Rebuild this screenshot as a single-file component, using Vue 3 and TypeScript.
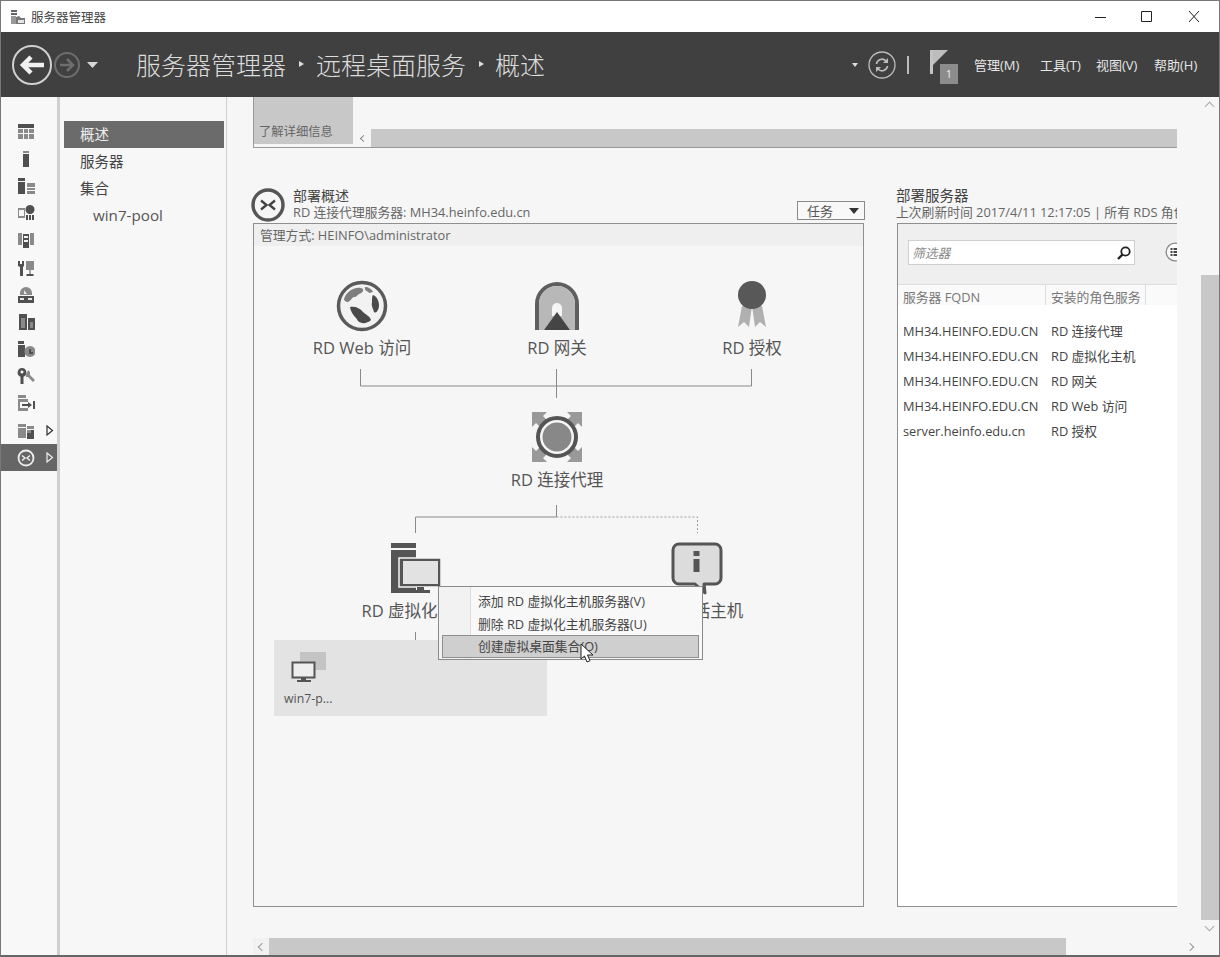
<script setup lang="ts">
interface Shape { d: string; fill: string }
interface RailItem { id: number; shapes: Shape[]; arrow?: boolean }

const D = '#505050'
const M = '#8a8a8a'

const rail: RailItem[] = [
  { id: 1, shapes: [
    { d: 'M1 1h16v4H1z', fill: D },
    { d: 'M1 6h5v4H1zM7 6h4v4H7zM12 6h5v4h-5zM1 11h5v5H1zM7 11h4v5H7zM12 11h5v5h-5z', fill: M },
  ] },
  { id: 2, shapes: [
    { d: 'M6 1h6v2H6z', fill: M },
    { d: 'M6 4h6v13H6z', fill: D },
  ] },
  { id: 3, shapes: [
    { d: 'M1 1h7v3H1zM1 5h7v12H1z', fill: D },
    { d: 'M10 6h8v4h-8zM10 11h8v2h-8zM10 14h8v3h-8z', fill: M },
  ] },
  { id: 4, shapes: [
    { d: 'M1 4h7v10H1z', fill: M },
    { d: 'M2 6h5v6H2z', fill: '#f6f6f6' },
    { d: 'M13 1a4.500 4.500 0 1 1-.01 0zM9 11h2v5H9zM12 11h2v5h-2zM15 11h2v5h-2z', fill: D },
  ] },
  { id: 5, shapes: [
    { d: 'M1 2h4v12H1zM13 2h4v12h-4z', fill: M },
    { d: 'M6 3h6v14H6z', fill: D },
    { d: 'M7 5h4v2H7zM7 9h4v2H7z', fill: '#f6f6f6' },
  ] },
  { id: 6, shapes: [
    { d: 'M1 2h2v3h2V2h2v5l-1 1v9H3V8L1 7z', fill: D },
    { d: 'M9 2h8v9H9z', fill: M },
    { d: 'M12.500 11h1v4h3v2h-7v-2h3z', fill: D },
  ] },
  { id: 7, shapes: [
    { d: 'M9 1a6 6 0 0 1 6 6v2H3V7a6 6 0 0 1 6-6z', fill: M },
    { d: 'M1 10h16v7H1z', fill: D },
    { d: 'M3 12h4v2H3zM11 12h4v2h-4zM7 4l3 4H7z', fill: '#e8e8e8' },
  ] },
  { id: 8, shapes: [
    { d: 'M2 1h8v16H2zM11 5h7v12h-7z', fill: D },
    { d: 'M4 5h4v10H4zM13 9h3v6h-3z', fill: M },
  ] },
  { id: 9, shapes: [
    { d: 'M1 1h6v3H1zM1 5h7v12H1z', fill: D },
    { d: 'M13 6a5.500 5.500 0 1 1-.01 0z', fill: M },
    { d: 'M12 9h2v3h2v2h-4z', fill: D },
  ] },
  { id: 10, shapes: [
    { d: 'M5 1a4.500 4.500 0 0 1 1.500 8.700V17h-3V9.700A4.500 4.500 0 0 1 5 1zM5 3.500a1.500 1.500 0 1 0 .01 0z', fill: D },
    { d: 'M11 3l2 2v3l5 5-2 2-5-5H9V8z', fill: M },
  ] },
  { id: 11, shapes: [
    { d: 'M1 1h8v3H1z', fill: M },
    { d: 'M1 5h10v3H3v6h8v3H1z', fill: M },
    { d: 'M5 10h6V8l4 3-4 3v-2H5zM16 7h2v8h-2z', fill: D },
  ] },
  { id: 12, arrow: true, shapes: [
    { d: 'M1 2h8v3h-8zM1 6h8v10H1z', fill: M },
    { d: 'M10 4h7v3h-7z', fill: M },
    { d: 'M10 8h7v9h-7z', fill: D },
    { d: 'M10 8h4v3h-4z', fill: M },
  ] },
]

interface Row { fqdn: string; role: string }
const rows: Row[] = [
  { fqdn: 'MH34.HEINFO.EDU.CN', role: 'RD 连接代理' },
  { fqdn: 'MH34.HEINFO.EDU.CN', role: 'RD 虚拟化主机' },
  { fqdn: 'MH34.HEINFO.EDU.CN', role: 'RD 网关' },
  { fqdn: 'MH34.HEINFO.EDU.CN', role: 'RD Web 访问' },
  { fqdn: 'server.heinfo.edu.cn', role: 'RD 授权' },
]
const navItems = ['服务器', '集合']
const menus = [
  { label: '管理(M)', w: 66 },
  { label: '工具(T)', w: 56 },
  { label: '视图(V)', w: 58 },
  { label: '帮助(H)', w: 43 },
]
</script>

<template>
  <div class="window">
    <div class="titlebar">
      <svg class="app-icon" width="16" height="16" viewBox="0 0 16 16">
        <path d="M1 1h6v2H1zM1 4h6v2H1z" fill="#666" />
        <path d="M1 7h5v8H1z" fill="#999" />
        <path d="M6 8l3-1 2 2h4v6H6z" fill="#777" />
        <path d="M8 11h6v3H8z" fill="#e4e4e4" />
      </svg>
      <span class="title-text">服务器管理器</span>
      <div class="win-controls">
        <svg width="120" height="16" viewBox="0 0 120 16">
          <path d="M1 8.500h11" stroke="#222" fill="none" />
          <path d="M47.500 2.500h10v10h-10z" stroke="#222" fill="none" />
          <path d="M95 2l10 11M105 2L95 13" stroke="#222" fill="none" />
        </svg>
      </div>
    </div>

    <header class="header">
      <svg class="nav-arrows" width="90" height="44" viewBox="0 0 90 44">
        <circle cx="21" cy="22" r="19" fill="none" stroke="#d0d0d0" stroke-width="2" />
        <path d="M33 22H12M20 14l-8 8 8 8" fill="none" stroke="#f0f0f0" stroke-width="4.500" />
        <circle cx="56" cy="22" r="12" fill="none" stroke="#6e6e6e" stroke-width="2" />
        <path d="M49 22h13M56 16l6 6-6 6" fill="none" stroke="#6e6e6e" stroke-width="2.500" />
        <path d="M76 19h11l-5.500 6z" fill="#d8d8d8" />
      </svg>
      <div class="crumbs">
        <span>服务器管理器</span><i class="crumb-sep"></i><span>远程桌面服务</span><i class="crumb-sep last"></i><span>概述</span>
      </div>
      <div class="head-tools">
        <i class="tiny-caret"></i>
        <svg class="refresh" width="28" height="28" viewBox="0 0 28 28">
          <circle cx="14" cy="14" r="13" fill="none" stroke="#bdbdbd" stroke-width="1.300" />
          <path d="M8.500 13a5.500 5.500 0 0 1 9.500-3M19.500 15a5.500 5.500 0 0 1-9.500 3" fill="none" stroke="#bdbdbd" stroke-width="1.600" />
          <path d="M20 7v5h-5zM8 21v-5h5z" fill="#bdbdbd" />
        </svg>
        <i class="head-sep"></i>
        <div class="flag">
          <svg class="flag-svg" width="20" height="26" viewBox="0 0 20 26">
            <path d="M1 1h3v24H1z" fill="#c4c4c4" />
            <path d="M4 1h15L4 16z" fill="#bdbdbd" />
          </svg>
          <span class="flag-badge">1</span>
        </div>
        <nav class="menus">
          <span v-for="m in menus" :key="m.label" class="menu-item" :style="{ width: m.w + 'px' }">{{ m.label }}</span>
        </nav>
      </div>
    </header>

    <div class="body">
      <aside class="rail">
        <div v-for="r in rail" :key="r.id" class="rail-row">
          <svg width="18" height="18" viewBox="0 0 18 18">
            <path v-for="(s, i) in r.shapes" :key="i" :d="s.d" :fill="s.fill" />
          </svg>
          <svg v-if="r.arrow" class="rail-arrow" width="8" height="11" viewBox="0 0 8 11">
            <path d="M1 1l5.500 4.500L1 10z" fill="none" stroke="#333" stroke-width="1.200" />
          </svg>
        </div>
        <div class="rail-row active">
          <svg width="18" height="18" viewBox="0 0 18 18">
            <circle cx="9" cy="9" r="7.500" fill="none" stroke="#eee" stroke-width="1.800" />
            <path d="M5 6.500L8 9l-3 2.500M13 6.500L10 9l3 2.500" fill="none" stroke="#eee" stroke-width="1.500" />
          </svg>
          <svg class="rail-arrow" width="8" height="11" viewBox="0 0 8 11">
            <path d="M1 1l5.500 4.500L1 10z" fill="none" stroke="#eee" stroke-width="1.200" />
          </svg>
        </div>
      </aside>

      <nav class="nav">
        <div class="nav-item selected">概述</div>
        <div v-for="n in navItems" :key="n" class="nav-item">{{ n }}</div>
        <div class="nav-item sub">win7-pool</div>
      </nav>

      <main class="content">
        <div class="pane">
          <div class="strip">
            <div class="tile">了解详细信息</div>
            <div class="strip-scroll">
              <span class="chev-left"></span>
              <div class="strip-thumb"></div>
            </div>
          </div>

          <div class="sections">
            <section class="overview">
              <div class="sec-head">
                <svg class="sec-icon" width="34" height="34" viewBox="0 0 34 34">
                  <circle cx="17" cy="17" r="15" fill="none" stroke="#555" stroke-width="3.400" />
                  <path d="M10 12.500l5.500 4.500-5.500 4.500M24 12.500L18.500 17l5.500 4.500" fill="none" stroke="#444" stroke-width="2.400" />
                </svg>
                <div class="sec-text">
                  <div class="sec-title">部署概述</div>
                  <div class="sec-sub">RD 连接代理服务器: MH34.heinfo.edu.cn</div>
                </div>
                <button class="task-btn"><span>任务</span><i></i></button>
              </div>

              <div class="panel">
                <div class="panel-band">管理方式: HEINFO\administrator</div>
                <div class="canvas">
                  <svg class="wires" width="609" height="660" viewBox="0 0 609 660">
                    <path d="M106.500 123v17h391v-17M302.500 123v29" fill="none" stroke="#8a8a8a" />
                    <path d="M302.500 259v12h-141v16" fill="none" stroke="#8a8a8a" />
                    <path d="M302.500 271h141v16" fill="none" stroke="#999" stroke-dasharray="2 2" />
                    <path d="M161.500 386v8" fill="none" stroke="#8a8a8a" />
                  </svg>

                  <div class="node n-web">
                    <svg width="52" height="52" viewBox="0 0 52 52">
                      <circle cx="26" cy="26" r="23.500" fill="#f2f2f2" stroke="#5a5a5a" stroke-width="3.500" />
                      <path d="M8 19c3-8 10-12 17-11 4 1 2 5-2 6-2 1-2 3-5 3-2 0-3 4-6 5-2 0-4-1-4-3z" fill="#7e7e7e" />
                      <path d="M14 27c5-1 10 1 13 5 3 3 7 4 8 8-4 4-10 4-13 1-2-4-7-7-8-14z" fill="#4a4a4a" />
                      <path d="M37 15c3 1 6 5 6 10 0 5-3 9-5 7-1-4-3-6-2-10 0-3 0-6 1-7z" fill="#4a4a4a" />
                      <path d="M29 7c3 0 7 2 8 5l-4 1c-1-2-5-2-4-6z" fill="#7e7e7e" />
                    </svg>
                    <span>RD Web 访问</span>
                  </div>

                  <div class="node n-gate">
                    <svg width="46" height="52" viewBox="0 0 46 52">
                      <path d="M1 50V24a22 22 0 0 1 44 0v26h-4V24a18 18 0 0 0-36 0v26z" fill="#5e5e5e" />
                      <path d="M5 50V24a18 18 0 0 1 36 0v26z" fill="#b8b8b8" />
                      <path d="M18 36v-8a5 5 0 0 1 10 0v8z" fill="#f5f5f5" />
                      <path d="M23 32l13 18H10z" fill="#454545" />
                    </svg>
                    <span>RD 网关</span>
                  </div>

                  <div class="node n-lic">
                    <svg width="40" height="52" viewBox="0 0 40 52">
                      <path d="M10 26h10l-3 21-5-5-6 5zM20 26h10l4 21-6-5-5 5z" fill="#b0b0b0" />
                      <circle cx="20" cy="15" r="14" fill="#585858" />
                    </svg>
                    <span>RD 授权</span>
                  </div>

                  <div class="node n-broker">
                    <svg width="52" height="52" viewBox="0 0 52 52">
                      <path d="M1 1h15l-4 4 6 6-7 7-6-6-4 4zM51 1v15l-4-4-6 6-7-7 6-6-4-4zM1 51V36l4 4 6-6 7 7-6 6 4 4zM51 51H36l4-4-6-6 7-7 6 6 4-4z" fill="#999" />
                      <circle cx="26" cy="26" r="19" fill="#f6f6f6" stroke="#555" stroke-width="4" />
                      <circle cx="26" cy="26" r="14.500" fill="#888" />
                    </svg>
                    <span>RD 连接代理</span>
                  </div>

                  <div class="node n-virt">
                    <svg width="52" height="52" viewBox="0 0 52 52">
                      <path d="M1 1h25v5H1z" fill="#555" />
                      <path d="M1 8h25v43H1z" fill="#555" />
                      <path d="M9 16h42v29H9z" fill="#555" stroke="#f6f6f6" stroke-width="1.500" />
                      <path d="M13 19h35v23H13z" fill="#e2e2e2" />
                      <path d="M27 45h7v3h6v3H20v-3h7z" fill="#555" />
                    </svg>
                    <span>RD 虚拟化主机</span>
                  </div>

                  <div class="node n-info">
                    <svg width="52" height="56" viewBox="0 0 52 56">
                      <path d="M8 2h36a6 6 0 0 1 6 6v28a6 6 0 0 1-6 6H33l1 9-10-9H8a6 6 0 0 1-6-6V8a6 6 0 0 1 6-6z" fill="#dcdcdc" stroke="#555" stroke-width="3" stroke-linejoin="round" />
                      <path d="M22.500 9h6v5h-6zM22.500 17h6v13h-6z" fill="#555" />
                    </svg>
                    <span>RD 会话主机</span>
                  </div>

                  <div class="pool">
                    <svg width="36" height="34" viewBox="0 0 36 34">
                      <path d="M9 1h26v18H9z" fill="#c4c4c4" />
                      <path d="M1.500 11.500h22v15h-22z" fill="#eee" stroke="#555" stroke-width="2" />
                      <path d="M10 27h5v2h5v2H6v-2h4z" fill="#555" />
                    </svg>
                    <span>win7-p...</span>
                  </div>

                  <div class="ctx-menu">
                    <div class="ctx-item">添加 RD 虚拟化主机服务器(V)</div>
                    <div class="ctx-item">删除 RD 虚拟化主机服务器(U)</div>
                    <div class="ctx-item hot">创建虚拟桌面集合(O)</div>
                    <svg class="cursor" width="15" height="21" viewBox="0 0 15 21">
                      <path d="M1 1v15l3.500-3 2.500 6 3-1.300-2.500-5.700H13z" fill="#fff" stroke="#222" stroke-width="1" />
                    </svg>
                  </div>
                </div>
              </div>
            </section>

            <section class="servers">
              <div class="srv-head">
                <div class="sec-title">部署服务器</div>
                <div class="sec-sub nowrap">上次刷新时间 2017/4/11 12:17:05 | 所有 RDS 角色</div>
              </div>
              <div class="srv-panel">
                <div class="filter-zone">
                  <div class="filter">
                    <span>筛选器</span>
                    <svg width="16" height="16" viewBox="0 0 16 16">
                      <circle cx="9.500" cy="6.500" r="4.200" fill="none" stroke="#222" stroke-width="1.800" />
                      <path d="M6.500 9.500L2 14" stroke="#222" stroke-width="2.400" />
                    </svg>
                  </div>
                  <svg class="list-btn" width="20" height="20" viewBox="0 0 20 20">
                    <circle cx="10" cy="10" r="8.800" fill="#fafafa" stroke="#888" stroke-width="1.300" />
                    <path d="M5.500 6h2v2h-2zM5.500 9h2v2h-2zM5.500 12h2v2h-2zM8.500 6h7v2h-7zM8.500 9h7v2h-7zM8.500 12h7v2h-7z" fill="#444" />
                  </svg>
                </div>
                <div class="grid-head">
                  <div class="col-a">服务器 FQDN</div>
                  <div class="col-b">安装的角色服务</div>
                </div>
                <div class="grid-rows">
                  <div v-for="(r, i) in rows" :key="i" class="grid-row">
                    <div class="cell-a">{{ r.fqdn }}</div>
                    <div class="cell-b">{{ r.role }}</div>
                  </div>
                </div>
              </div>
            </section>
          </div>
        </div>

        <div class="vscroll">
          <span class="chev up"></span>
          <div class="v-track"><div class="v-thumb"></div></div>
          <span class="chev down"></span>
        </div>
        <div class="hscroll">
          <span class="chev-h left"></span>
          <div class="h-thumb"></div>
          <span class="chev-h right"></span>
        </div>
        <div class="corner"></div>
      </main>
    </div>
  </div>
</template>

<style>
html, body { margin: 0; background: #f6f6f6; }
</style>

<style scoped>
.window {
  width: 1220px;
  height: 957px;
  box-sizing: border-box;
  border: 1px solid #777;
  border-bottom: 2px solid #666;
  display: flex;
  flex-direction: column;
  overflow: hidden;
  font-family: "Open Sans", "Noto Sans CJK SC", sans-serif;
  color: #555;
  background: #f6f6f6;
}
.titlebar {
  height: 31px;
  flex: none;
  background: #fff;
  display: flex;
  align-items: center;
  padding-left: 9px;
  color: #444;
  font-size: 12.500px;
}
.app-icon { margin-right: 5px; }
.win-controls { margin-left: auto; margin-right: 5px; display: flex; }
.header {
  height: 65px;
  flex: none;
  background: #404040;
  display: flex;
  align-items: center;
  padding: 0 22px 0 10px;
  color: #e4e4e4;
}
.nav-arrows { flex: none; }
.crumbs {
  margin-left: 35px;
  margin-bottom: 2px;
  display: flex;
  align-items: center;
  font-size: 25px;
  font-weight: 300;
  color: #dcdcdc;
  white-space: nowrap;
}
.crumb-sep {
  width: 0;
  height: 0;
  margin: 0 12px 0 13px;
  border-left: 5px solid #ddd;
  border-top: 3.500px solid transparent;
  border-bottom: 3.500px solid transparent;
}
.crumb-sep.last { margin: 0 11px 0 13px; }
.head-tools { margin-left: auto; display: flex; align-items: center; }
.tiny-caret {
  width: 0;
  height: 0;
  border-top: 4px solid #ddd;
  border-left: 3.500px solid transparent;
  border-right: 3.500px solid transparent;
  margin-right: 10px;
}
.refresh { flex: none; }
.head-sep { width: 2px; height: 18px; background: #bbb; margin: 0 20px 0 11px; }
.flag { position: relative; width: 29px; height: 36px; margin-right: 16px; margin-top: 4px; }
.flag-svg { display: block; }
.flag-badge {
  position: absolute;
  left: 11px;
  top: 15px;
  width: 18px;
  height: 20px;
  background: #8c8c8c;
  color: #eee;
  font-size: 11px;
  line-height: 20px;
  text-align: center;
}
.menus { display: flex; font-size: 13px; color: #e6e6e6; }
.menu-item { white-space: nowrap; display: block; }

.body { flex: 1; min-height: 0; display: flex; }
.rail {
  width: 59px;
  flex: none;
  box-sizing: border-box;
  padding-top: 21px;
  border-right: 3px solid #cfcfcf;
  background: #f8f8f8;
}
.rail-row {
  height: 27.200px;
  box-sizing: border-box;
  display: flex;
  align-items: center;
  padding-left: 16px;
  position: relative;
}
.rail-row.active { background: #666; }
.rail-arrow { position: absolute; left: 45px; top: 8px; }
.nav {
  width: 167px;
  flex: none;
  box-sizing: border-box;
  padding: 24px 2px 0 4px;
  border-right: 1px solid #cfcfcf;
  background: #f7f7f7;
}
.nav-item {
  height: 27px;
  line-height: 27px;
  padding-left: 16px;
  font-size: 14.500px;
  color: #444;
}
.nav-item.selected { background: #6b6b6b; color: #eee; }
.nav-item.sub { padding-left: 29px; font-size: 15.200px; line-height: 26px; color: #555; }

.content {
  flex: 1;
  min-width: 0;
  display: grid;
  grid-template-columns: 1fr 18px;
  grid-template-rows: 1fr 17px;
  background: #f6f6f6;
}
.pane { padding-left: 26px; overflow: hidden; min-width: 0; min-height: 0; }
.strip {
  width: 924px;
  height: 51px;
  box-sizing: border-box;
  border-left: 1px solid #999;
  border-bottom: 1px solid #999;
  display: flex;
  align-items: flex-start;
}
.tile {
  width: 99px;
  height: 47px;
  flex: none;
  background: #c8c8c8;
  box-sizing: border-box;
  padding: 26px 0 0 5px;
  font-size: 12.300px;
  line-height: 18px;
  color: #666;
  white-space: nowrap;
  overflow: hidden;
}
.strip-scroll { flex: 1; height: 18px; margin-top: 32px; display: flex; }
.chev-left { width: 18px; flex: none; position: relative; }
.chev-left::before {
  content: "";
  position: absolute;
  left: 8px;
  top: 7px;
  width: 4px;
  height: 4px;
  border-left: 1px solid #888;
  border-bottom: 1px solid #888;
  transform: rotate(45deg);
}
.strip-thumb { flex: 1; background: #c8c8c8; }

.sections {
  margin-top: 40px;
  width: 924px;
  display: grid;
  grid-template-columns: 611px 280px;
  column-gap: 33px;
}
.sec-head { height: 35px; display: flex; align-items: flex-start; position: relative; box-sizing: border-box; margin-left: -2px; }
.sec-icon { flex: none; }
.sec-text { margin-left: 8px; padding-top: 0; }
.sec-title { font-size: 14px; line-height: 16px; color: #444; }
.sec-sub { font-size: 12.800px; line-height: 16px; color: #666; }
.servers .sec-title { font-size: 14.500px; }
.nowrap { white-space: nowrap; overflow: hidden; }
.task-btn {
  margin-left: auto;
  width: 68px;
  height: 19px;
  margin-top: 13px;
  margin-right: -1px;
  padding: 0 5px 0 9px;
  border: 1px solid #8a8a8a;
  background: #f8f8f8;
  display: flex;
  align-items: center;
  justify-content: space-between;
  font-family: inherit;
  font-size: 13px;
  color: #555;
}
.task-btn i {
  width: 0;
  height: 0;
  border-top: 6px solid #333;
  border-left: 5px solid transparent;
  border-right: 5px solid transparent;
}
.panel {
  height: 684px;
  box-sizing: border-box;
  border: 1px solid #8f8f8f;
  display: flex;
  flex-direction: column;
}
.panel-band {
  height: 22px;
  flex: none;
  background: #efefef;
  font-size: 12.800px;
  line-height: 23px;
  padding-left: 6px;
  color: #666;
}
.canvas { flex: 1; position: relative; }
.wires { position: absolute; left: 0; top: 0; pointer-events: none; }
.node {
  position: absolute;
  width: 160px;
  display: flex;
  flex-direction: column;
  align-items: center;
  font-size: 16.500px;
  line-height: 22px;
  color: #555;
  white-space: nowrap;
}
.node svg { flex: none; }
.node span { display: block; }
.n-web { left: 28px; top: 34px; }
.n-web span, .n-gate span, .n-lic span { margin-top: 5px; }
.n-gate { left: 223px; top: 34px; }
.n-lic { left: 418px; top: 34px; }
.n-broker { left: 223px; top: 165px; }
.n-broker span { margin-top: 6px; }
.n-virt { left: 82px; top: 296px; }
.n-virt span { margin-top: 6px; }
.n-info { left: 363px; top: 296px; }
.n-info span { margin-top: 2px; }
.pool {
  position: absolute;
  left: 20px;
  top: 394px;
  width: 273px;
  height: 76px;
  box-sizing: border-box;
  background: #e3e3e3;
  padding: 11px 0 0 10px;
  font-size: 12.300px;
  line-height: 16px;
  color: #555;
  display: flex;
  flex-direction: column;
  align-items: flex-start;
}
.pool svg { margin-left: 7px; margin-bottom: 6px; }
.ctx-menu {
  position: absolute;
  left: 184px;
  top: 340px;
  width: 265px;
  height: 74px;
  box-sizing: border-box;
  border: 1px solid #8a8a8a;
  background: linear-gradient(to right, #f2f2f2 31px, #ddd 31px, #ddd 32px, #f8f8f8 32px);
  padding: 3px 3px 0 3px;
  font-size: 12.800px;
  color: #444;
  z-index: 2;
}
.ctx-item { height: 22.500px; line-height: 22.500px; padding-left: 36px; white-space: nowrap; box-sizing: border-box; }
.ctx-item.hot { background: #cfcfcf; border: 1px solid #8f8f8f; line-height: 21.500px; padding-left: 35px; }
.cursor { position: absolute; left: 141px; top: 56px; }

.srv-head { height: 35px; margin-left: -1px; white-space: nowrap; }
.srv-panel {
  height: 684px;
  box-sizing: border-box;
  border: 1px solid #8f8f8f;
  border-right: none;
  background: #fff;
  overflow: hidden;
}
.filter-zone {
  height: 61px;
  background: #efefef;
  border-bottom: 1px solid #ddd;
  display: flex;
  align-items: flex-start;
  padding: 16px 0 0 10px;
  box-sizing: border-box;
  overflow: hidden;
}
.filter {
  width: 227px;
  height: 25px;
  flex: none;
  box-sizing: border-box;
  border: 1px solid #cfcfcf;
  background: #fff;
  display: flex;
  align-items: center;
  justify-content: space-between;
  padding: 0 2px 0 3px;
  font-size: 12.800px;
  font-style: italic;
  color: #888;
}
.list-btn { flex: none; margin: 2px 0 0 30px; }
.grid-head { height: 20px; display: flex; font-size: 12.800px; line-height: 25px; color: #777; background: #fafafa; }
.col-a { width: 148px; box-sizing: border-box; padding-left: 5px; border-right: 1px solid #ddd; flex: none; }
.col-b { width: 100px; box-sizing: border-box; padding-left: 5px; border-right: 1px solid #ddd; flex: none; white-space: nowrap; overflow: hidden; }
.grid-rows { padding-top: 14px; }
.grid-row { height: 25px; line-height: 25px; display: flex; font-size: 12.800px; color: #444; }
.cell-a { width: 148px; flex: none; padding-left: 5px; box-sizing: border-box; white-space: nowrap; }
.cell-b { padding-left: 5px; white-space: nowrap; }

.vscroll { display: flex; flex-direction: column; background: #f6f6f6; min-height: 0; }
.v-track { flex: 1; padding-top: 160px; display: flex; flex-direction: column; }
.v-thumb { flex: 1; background: #c8c8c8; }
.chev { height: 18px; flex: none; position: relative; display: block; }
.chev::before {
  content: "";
  position: absolute;
  left: 5px;
  top: 6px;
  width: 6px;
  height: 6px;
  border-left: 1.500px solid #aaa;
  border-top: 1.500px solid #aaa;
  transform: rotate(45deg);
}
.chev.down::before { transform: rotate(225deg); top: 3px; }
.hscroll { display: flex; padding-left: 26px; background: #f6f6f6; }
.h-thumb { width: 797px; background: #c8c8c8; }
.chev-h { width: 16px; flex: none; position: relative; background: #f1f1f1; }
.chev-h::before {
  content: "";
  position: absolute;
  left: 6px;
  top: 6px;
  width: 5px;
  height: 5px;
  border-left: 1.500px solid #999;
  border-bottom: 1.500px solid #999;
  transform: rotate(45deg);
}
.chev-h.right { margin-left: auto; margin-right: 4px; background: transparent; }
.chev-h.right::before { transform: rotate(225deg); }
.corner { background: #f6f6f6; }
</style>
